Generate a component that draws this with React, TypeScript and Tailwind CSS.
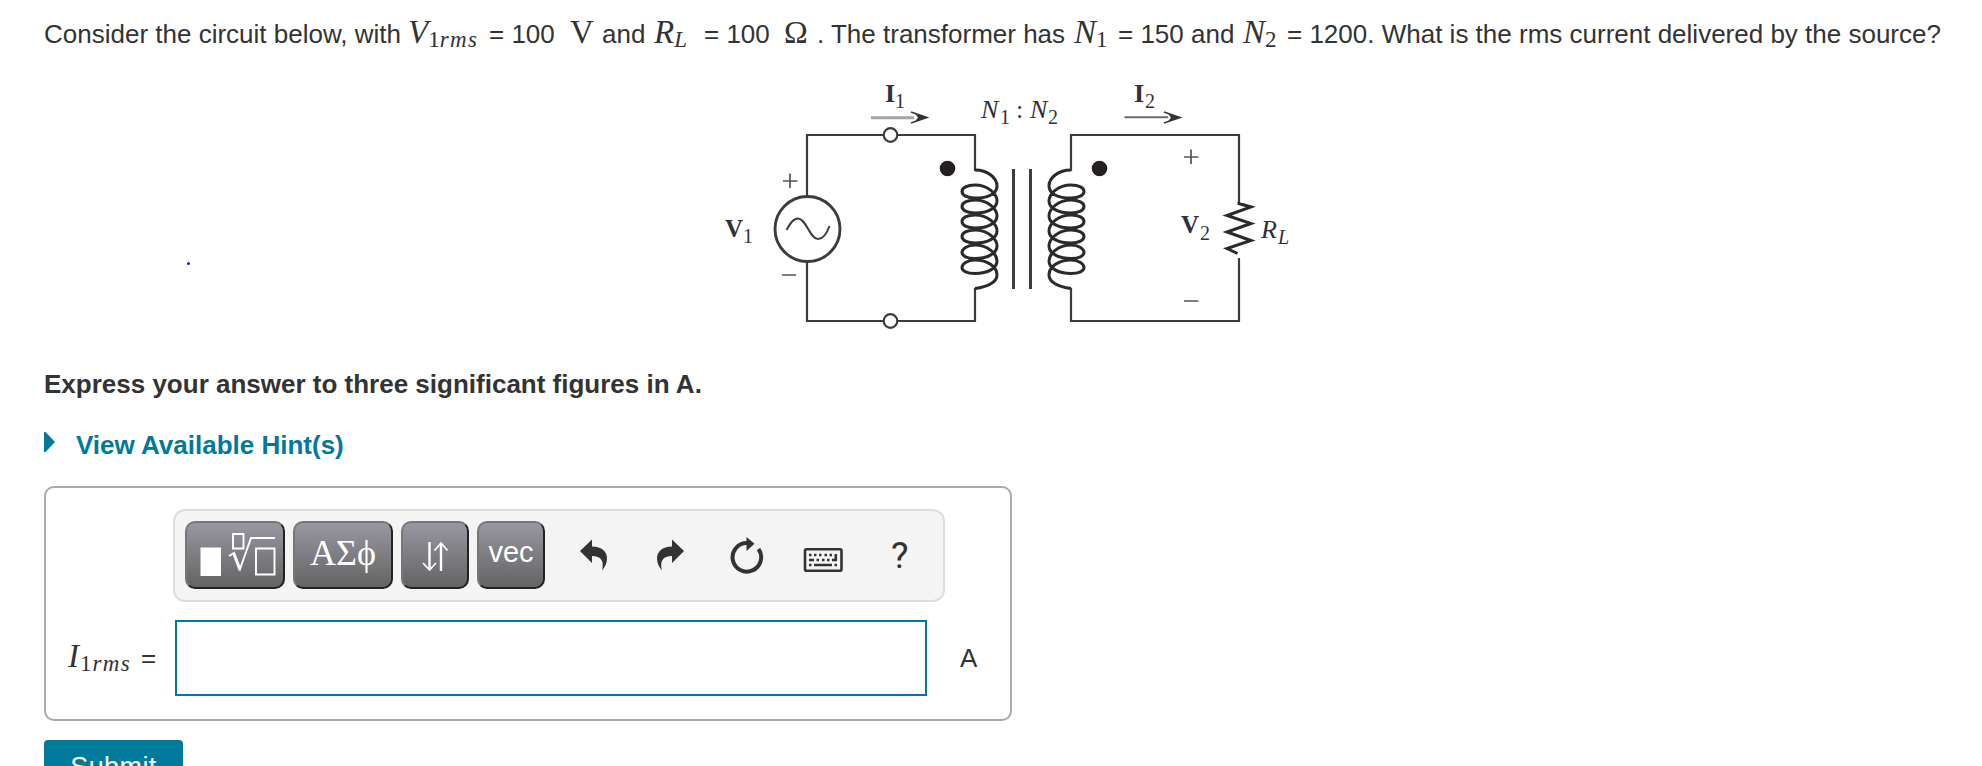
import React from 'react';

interface MathProps {
  base: string;
  sub?: string;
  subItalic?: string;
  className?: string;
}

const MathVar: React.FC<MathProps> = ({ base, sub, subItalic, className = '' }) => (
  <span className={`inline-block shrink-0 font-[Liberation_Serif,serif] text-[33px] ${className}`}>
    <i>{base}</i>
    <span className="relative top-1 text-[23px]">
      {sub}
      {subItalic && <i className="tracking-[1.4px]">{subItalic}</i>}
    </span>
  </span>
);

// One looped winding, drawn from the top lead to the bottom lead
const coil =
  'M275 170 C288 170 297 178 297 186 C297 194 288 198 275 198 C267 198 262 195 262 191.500 C262 188 267 185 275 185 C288 185 297 194 297 201 C297 208 288 213 275 213 C267 213 262 210 262 206.500 C262 203 267 200 275 200 C288 200 297 209 297 216 C297 223 288 228 275 228 C267 228 262 225 262 221.500 C262 218 267 215 275 215 C288 215 297 224 297 231 C297 238 288 243 275 243 C267 243 262 240 262 236.500 C262 233 267 230 275 230 C288 230 297 239 297 246 C297 253 288 258.500 275 258.500 C267 258.500 262 256 262 252.500 C262 249 267 245 275 245 C288 245 297 254 297 261 C297 268 288 273.500 275 273.500 C267 273.500 262 271 262 267.500 C262 264 267 260 275 260 C288 260 297 267 297 275 C297 282 288 287 275 288.500';

const Circuit = () => (
  <svg className="block h-[280px] w-[600px]" viewBox="700 70 600 280" fill="none" stroke="#3d3b3c" strokeWidth="2.200">
    <path d="M807 196 V135 H883 M898 135 H975 V171 M975 288 V321 H898 M883 321 H807 V261" />
    <circle cx="890.500" cy="135" r="6.800" />
    <circle cx="890.500" cy="321" r="6.800" />
    <circle cx="807.500" cy="229" r="32.500" strokeWidth="2.900" />
    <path d="M786.500 230 C790 224 793 218.500 798 218.500 C806 218.500 810 239 818 239 C823 239 827 233 829.500 226" strokeWidth="2" />
    <path d="M871 117.800 H914" strokeWidth="3" stroke="#a5a5a5" />
    <path d="M1124.500 117.300 H1168" strokeWidth="2" stroke="#6b6b6b" />
    <path d="M911 112 L927 117.500 L911 123 M1164 112 L1180 117.500 L1164 123" strokeWidth="1.600" />
    <path d="M928 117.500 L915 113.500 L918 117.500 L915 121.500 Z M1181 117.500 L1168 113.500 L1171 117.500 L1168 121.500 Z" fill="#333132" stroke="none" />
    <path d={coil} transform="translate(700 0)" strokeWidth="3" stroke="#2b292a" />
    <path d={coil} transform="translate(1346 0) scale(-1 1)" strokeWidth="3" stroke="#2b292a" />
    <path d="M1013.500 169 V289 M1030.500 169 V289" strokeWidth="3" />
    <circle cx="947.500" cy="168.500" r="7.800" fill="#231f20" stroke="none" />
    <circle cx="1099.500" cy="168.500" r="7.800" fill="#231f20" stroke="none" />
    <path d="M1071 171 V135 H1239 V203 M1239 258 V321 H1071 V288" />
    <path d="M1239 202 V203.500 L1251 207 L1227 215.500 L1251 223.500 L1227 232 L1251 240.500 L1227 248.500 L1237.500 253.500" strokeWidth="3" stroke="#2b292a" />
    <path d="M783 181 H797.500 M790 173.500 V188 M782 275 H796 M1184 157 H1198.500 M1191 149.500 V164 M1184 301 H1198.500" strokeWidth="1.700" stroke="#555" />
    <g fill="#332f3a" stroke="none" className="font-[Liberation_Serif,serif]">
      <text x="885" y="102" fontSize="26" fontWeight="700">I</text>
      <text x="895" y="107.500" fontSize="20">1</text>
      <text x="1134" y="102" fontSize="26" fontWeight="700">I</text>
      <text x="1145" y="107.500" fontSize="20">2</text>
      <text x="725" y="237" fontSize="25" fontWeight="700">V</text>
      <text x="743" y="243" fontSize="20">1</text>
      <text x="1181" y="233" fontSize="25" fontWeight="700">V</text>
      <text x="1200" y="239.500" fontSize="20">2</text>
      <text x="981" y="118" fontSize="26" fontStyle="italic">N</text>
      <text x="1000" y="123.500" fontSize="20">1</text>
      <text x="1016" y="118" fontSize="26">:</text>
      <text x="1030" y="118" fontSize="26" fontStyle="italic">N</text>
      <text x="1048" y="123.500" fontSize="20">2</text>
      <text x="1261" y="237.500" fontSize="26" fontStyle="italic">R</text>
      <text x="1278" y="243.500" fontSize="20" fontStyle="italic">L</text>
    </g>
  </svg>
);

const keyClass =
  'flex h-[68px] shrink-0 items-center justify-center rounded-[10px] border-2 border-t-[#777] border-l-[#777] border-r-[#222] border-b-[#222] bg-linear-to-b from-[#9997a2] to-[#646464] text-white';

const Toolbar = () => (
  <div className="-ml-[2px] flex h-[93px] w-[772px] items-start gap-2 rounded-xl border-2 border-[#ddd] bg-[#f4f4f4] pt-[10px] pl-[10px]">
    <button className={`${keyClass} w-[100px]`}>
      <svg className="h-16 w-24" viewBox="187 523 96 64" fill="none" stroke="white" strokeWidth="1.900">
        <path d="M200.500 547.500 H221 V576 H200.500 Z" fill="white" stroke="none" />
        <path d="M233 534 H243.500 V548.500 H233 Z M256 548.500 H274.500 V574.500 H256 Z" />
        <path d="M229 556 L234 553 L240 569 L251 538 H275" />
        <path d="M234 554 L240 570" strokeWidth="3" />
      </svg>
    </button>
    <button className={`${keyClass} w-[100px] font-[Liberation_Serif,serif] text-[36px]`}>
      <span className="relative -top-[2px]">ΑΣϕ</span>
    </button>
    <button className={`${keyClass} w-[68px]`}>
      <svg className="h-16 w-16" viewBox="403 523 64 64" fill="none" stroke="white" strokeWidth="2.400">
        <path d="M429.500 542 V569 M441 571 V544" />
        <path d="M423 563 L429.500 570 L436 563 M434.500 550.500 L441 543 L447.500 550.500" strokeWidth="1.700" />
      </svg>
    </button>
    <button className={`${keyClass} w-[68px] font-[Liberation_Sans,sans-serif] text-[29px]`}>
      <span className="relative -top-[2px]">vec</span>
    </button>
    <svg className="mt-[2px] h-16 w-[380px]" viewBox="553 523 380 64" fill="#333">
      <path d="M580 551 L592 539.500 V546.500 C602 546.500 607 551.500 607 558.500 C607 563 605 567 602 570.500 C604.500 561 601 556 592 556 V563 Z" />
      <path d="M684 551 L672 539.500 V546.500 C662 546.500 657 551.500 657 558.500 C657 563 659 567 662 570.500 C659.500 561 663 556 672 556 V563 Z" />
      <path d="M747 543 A14.300 14.300 0 1 0 758.500 549" fill="none" stroke="#333" strokeWidth="4" />
      <path d="M746.500 537 L754.500 543.700 L746.500 551 Z" />
      <rect x="805" y="549.300" width="36.500" height="21.500" rx="1.500" fill="none" stroke="#333" strokeWidth="2.600" />
      <path d="M809 555 H811.500 M814 555 H816.500 M819 555 H821.500 M824.500 555 H827 M829.500 555 H832 M809 560 H814 M816.500 560 H819 M822 560 H824.500 M827 560 H829.500 M832 560 H837 M809 565 H811.500 M814 565 H832 M834.500 565 H837" stroke="#333" strokeWidth="2.300" />
      <path d="M835.800 554 V561" stroke="#333" strokeWidth="2.600" />
      <text x="891" y="567.500" fontSize="37" className="font-[Roboto,sans-serif]">?</text>
    </svg>
  </div>
);

const App: React.FC = () => {
  return (
    <div className="h-[766px] overflow-hidden bg-white pl-11 font-[Liberation_Sans,sans-serif] text-[26px] text-[#333]">
      {/* Question */}
      <div className="flex h-[70px] items-baseline pt-[13px] leading-[38px] whitespace-pre">
        <span className="w-[364px] shrink-0">Consider the circuit below, with</span>
        <MathVar base="V" sub="1" subItalic="rms" className="w-[81px]" />
        <span className="w-[81px] shrink-0">= 100</span>
        <span className="w-[32px] shrink-0 font-[Liberation_Serif,serif] text-[33px]">V</span>
        <span className="w-[52px] shrink-0">and</span>
        <MathVar base="R" subItalic="L" className="w-[50px]" />
        <span className="w-[80px] shrink-0">= 100</span>
        <span className="w-[33px] shrink-0 font-[Liberation_Serif,serif] text-[32px]">Ω</span>
        <span className="w-[257px] shrink-0">. The transformer has</span>
        <MathVar base="N" sub="1" className="w-[44px]" />
        <span className="w-[125px] shrink-0">= 150 and</span>
        <MathVar base="N" sub="2" className="w-[44px]" />
        <span>= 1200. What is the rms current delivered by the source?</span>
      </div>

      {/* Circuit figure */}
      <div className="relative ml-[656px]">
        <Circuit />
        <span className="absolute -left-[513px] top-[192px] size-[3px] rounded-full bg-[#2a1fd0]" />
      </div>

      <p className="mt-[19px] h-[30px] leading-[30px] font-bold">
        Express your answer to three significant figures in A.
      </p>

      <div className="mt-[30px] flex h-[30px] items-center font-bold text-[#007a9c]">
        <svg className="mb-1 mr-[21px] h-5 w-[11px]" viewBox="0 0 11 20" fill="currentColor">
          <path d="M0 0 H1.500 L11 10 L1.500 20 H0 Z" />
        </svg>
        <span className="relative top-px">View Available Hint(s)</span>
      </div>

      {/* Answer box */}
      <div className="mt-[27px] h-[235px] w-[968px] rounded-[10px] border-2 border-[#aaa] pt-[21px]">
        <div className="ml-[129px]">
          <Toolbar />
        </div>
        <div className="mt-[18px] flex h-[76px] items-center">
          <div className="mb-[2px] flex w-[129px] items-baseline pl-[22px]">
            <MathVar base="I" sub="1" subItalic="rms" className="w-[73px] tracking-[1px]" />
            <span>=</span>
          </div>
          <input className="h-[76px] w-[752px] border-2 border-[#007a9c] bg-white px-3 outline-none" />
          <span className="ml-[33px]">A</span>
        </div>
      </div>

      <button className="mt-[19px] flex h-[60px] w-[139px] items-start justify-center rounded-[4px] bg-[#007a9c] pt-[12px] text-[27px] leading-[30px] tracking-[0.4px] text-white">
        Submit
      </button>
    </div>
  );
};

export default App;
